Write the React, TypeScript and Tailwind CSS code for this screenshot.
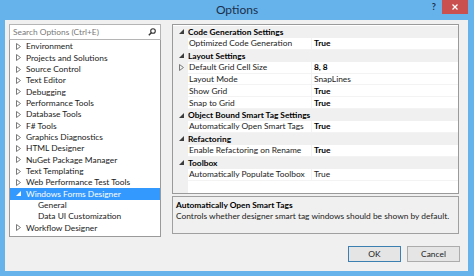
import React from "react";

const font = { fontFamily: 'Lato, "Noto Sans", sans-serif' };

function Collapsed({ white = false }: { white?: boolean }) {
  return (
    <svg width="5" height="7" viewBox="0 0 5 7" className="shrink-0">
      <path d="M0.5 0.5 L4.5 3.5 L0.5 6.5 Z" fill="none" stroke={white ? "#fff" : "#7a7a7a"} strokeWidth="1" />
    </svg>
  );
}

function Expanded({ white = false }: { white?: boolean }) {
  return (
    <svg width="5" height="5" viewBox="0 0 5 5" className="shrink-0">
      <path d="M5 0 L5 5 L0 5 Z" fill={white ? "#fff" : "#3c3c3c"} />
    </svg>
  );
}

type TreeItem = { label: string; kind: "c" | "e" | "n"; indent?: boolean; selected?: boolean };

const tree: TreeItem[] = [
  { label: "Environment", kind: "c" },
  { label: "Projects and Solutions", kind: "c" },
  { label: "Source Control", kind: "c" },
  { label: "Text Editor", kind: "c" },
  { label: "Debugging", kind: "c" },
  { label: "Performance Tools", kind: "c" },
  { label: "Database Tools", kind: "c" },
  { label: "F# Tools", kind: "c" },
  { label: "Graphics Diagnostics", kind: "c" },
  { label: "HTML Designer", kind: "c" },
  { label: "NuGet Package Manager", kind: "c" },
  { label: "Text Templating", kind: "c" },
  { label: "Web Performance Test Tools", kind: "c" },
  { label: "Windows Forms Designer", kind: "e", selected: true },
  { label: "General", kind: "n", indent: true },
  { label: "Data UI Customization", kind: "n", indent: true },
  { label: "Workflow Designer", kind: "c" },
];

type Row =
  | { cat: string }
  | { name: string; value: string; bold?: boolean; sub?: boolean };

const rows: Row[] = [
  { cat: "Code Generation Settings" },
  { name: "Optimized Code Generation", value: "True", bold: true },
  { cat: "Layout Settings" },
  { name: "Default Grid Cell Size", value: "8, 8", bold: true, sub: true },
  { name: "Layout Mode", value: "SnapLines" },
  { name: "Show Grid", value: "True", bold: true },
  { name: "Snap to Grid", value: "True", bold: true },
  { cat: "Object Bound Smart Tag Settings" },
  { name: "Automatically Open Smart Tags", value: "True", bold: true },
  { cat: "Refactoring" },
  { name: "Enable Refactoring on Rename", value: "True", bold: true },
  { cat: "Toolbox" },
  { name: "Automatically Populate Toolbox", value: "True" },
];

export default function App() {
  return (
    <div className="w-[474px] h-[276px] bg-[#66b3ec] flex flex-col text-[8.4px] text-[#222]" style={font}>
      {/* Title bar */}
      <div className="h-[20px] flex items-start shrink-0">
        <div className="w-[60px]" />
        <div className="flex-1 text-center text-[12px] leading-[19px] text-[#1b2f4a]">Options</div>
        <div className="w-[60px] flex items-start justify-end pr-[6px]">
          <span className="text-[9px] font-bold leading-[14px] text-[#1b2f4a] mr-[6px]">?</span>
          <div className="w-[26px] h-[14px] bg-[#c9504e] flex items-center justify-center">
            <svg width="6" height="6" viewBox="0 0 6 6">
              <path d="M0.5 0.5 L5.5 5.5 M5.5 0.5 L0.5 5.5" stroke="#fff" strokeWidth="1.3" />
            </svg>
          </div>
        </div>
      </div>

      {/* Body */}
      <div className="ml-[5px] mr-[6px] mb-[5px] flex-1 bg-[#f0f0f0] flex flex-col pl-[4px] pr-[9px] pt-[4px]">
        <div className="flex h-[213px] gap-[11px]">
          {/* Left column */}
          <div className="w-[152px] flex flex-col">
            <div className="h-[16px] border border-[#b5b5b5] bg-white flex items-center px-[3px] shrink-0">
              <span className="flex-1 text-[#7a7a7a]">Search Options (Ctrl+E)</span>
              <svg width="8" height="8" viewBox="0 0 8 8" className="mr-[1px]">
                <circle cx="5" cy="3" r="2.3" fill="none" stroke="#333" strokeWidth="1.1" />
                <path d="M3.3 4.7 L0.8 7.2" stroke="#333" strokeWidth="1.4" />
              </svg>
            </div>
            <div className="flex-1 border border-t-0 border-[#9a9a9a] bg-white pt-[1px]">
              {tree.map((t) => (
                <div
                  key={t.label}
                  className={
                    "h-[11.33px] flex items-center " +
                    (t.selected ? "bg-[#3399ff] text-white" : "")
                  }
                >
                  <div className="w-[16px] flex justify-end pr-[5px] shrink-0">
                    {t.kind === "c" && <Collapsed />}
                    {t.kind === "e" && <Expanded white />}
                  </div>
                  <span className={"whitespace-nowrap leading-none " + (t.indent ? "pl-[12px]" : "")}>{t.label}</span>
                </div>
              ))}
            </div>
          </div>

          {/* Right column */}
          <div className="w-[287px] flex flex-col">
            <div className="h-[170px] border border-[#9a9a9a] bg-white pt-[1px] flex flex-col shrink-0">
              {rows.map((r, i) =>
                "cat" in r ? (
                  <div key={i} className="h-[11.9px] bg-[#f0f0f0] flex items-center">
                    <div className="w-[15px] flex justify-center pl-[2px] shrink-0">
                      <Expanded />
                    </div>
                    <span className="font-bold text-black whitespace-nowrap leading-none">{r.cat}</span>
                  </div>
                ) : (
                  <div key={i} className="h-[11.9px] flex items-center">
                    <div className="w-[15px] h-full bg-[#f0f0f0] flex items-center justify-center pl-[2px] shrink-0">
                      {r.sub && <Collapsed />}
                    </div>
                    <div className="w-[123px] h-full flex items-center border-b border-[#f3f3f3] pl-[1px] shrink-0">
                      <span className="whitespace-nowrap leading-none">{r.name}</span>
                    </div>
                    <div className="flex-1 h-full flex items-center border-b border-l border-[#f3f3f3] pl-[2px]">
                      <span className={"whitespace-nowrap leading-none " + (r.bold ? "font-bold text-black" : "")}>{r.value}</span>
                    </div>
                  </div>
                )
              )}
              <div className="flex-1 flex">
                <div className="w-[15px] bg-[#f0f0f0]" />
              </div>
            </div>
            <div className="mt-[2px] h-[38px] border border-[#a0a0a0] flex flex-col px-[3px] pt-[3px]">
              <div className="font-bold text-black leading-[11px]">Automatically Open Smart Tags</div>
              <div className="leading-[11px] whitespace-nowrap">Controls whether designer smart tag windows should be shown by default.</div>
            </div>
          </div>
        </div>

        {/* Buttons */}
        <div className="mt-[9px] flex justify-end gap-[6px]">
          <div className="w-[53px] h-[16px] border border-[#3c7fb1] bg-[#e5e5e5] flex items-center justify-center">OK</div>
          <div className="w-[53px] h-[16px] border border-[#acacac] bg-[#e5e5e5] flex items-center justify-center mr-[-1px]">Cancel</div>
        </div>
      </div>
    </div>
  );
}
